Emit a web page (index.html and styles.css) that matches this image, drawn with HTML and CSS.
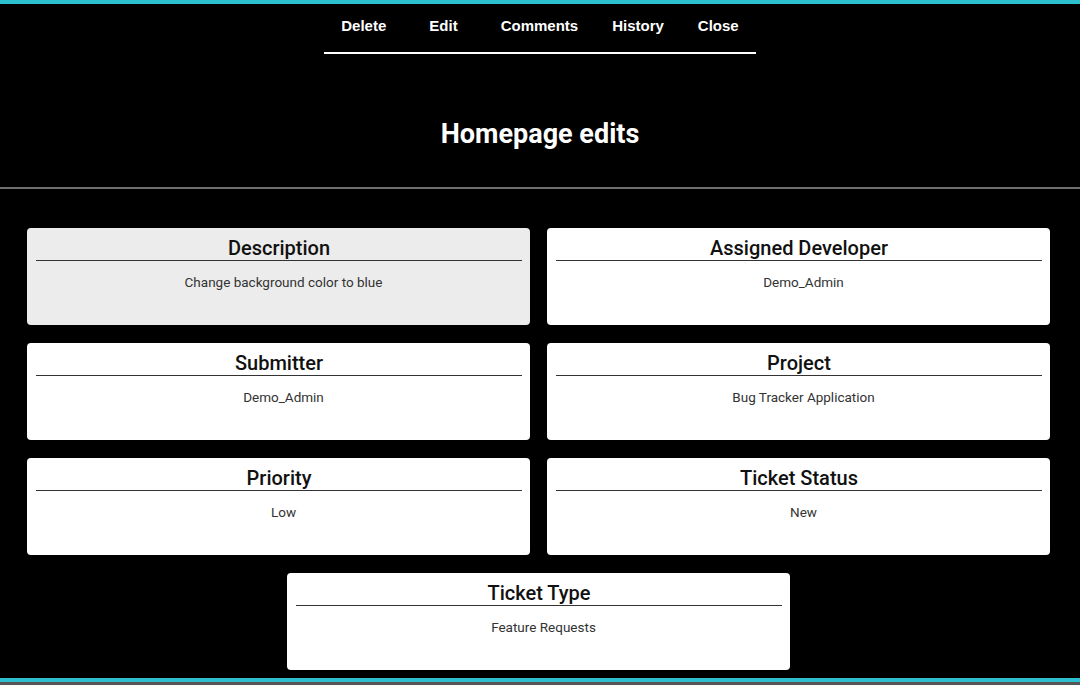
FILE: index.html
```html
<!DOCTYPE html>
<html>
<head>
<meta charset="utf-8">
<link rel="stylesheet" href="styles.css">
</head>
<body>
<div class="page">
  <header class="top">
    <nav class="actions">
      <a class="act">Delete</a>
      <a class="act act-edit">Edit</a>
      <a class="act">Comments</a>
      <a class="act">History</a>
      <a class="act">Close</a>
    </nav>
    <h1 class="title">Homepage edits</h1>
  </header>
  <main class="grid">
    <section class="card card-hover">
      <h3 class="card-head">Description</h3>
      <p class="card-val">Change background color to blue</p>
    </section>
    <section class="card">
      <h3 class="card-head">Assigned Developer</h3>
      <p class="card-val">Demo_Admin</p>
    </section>
    <section class="card">
      <h3 class="card-head">Submitter</h3>
      <p class="card-val">Demo_Admin</p>
    </section>
    <section class="card">
      <h3 class="card-head">Project</h3>
      <p class="card-val">Bug Tracker Application</p>
    </section>
    <section class="card">
      <h3 class="card-head">Priority</h3>
      <p class="card-val">Low</p>
    </section>
    <section class="card">
      <h3 class="card-head">Ticket Status</h3>
      <p class="card-val">New</p>
    </section>
    <section class="card card-wide">
      <h3 class="card-head">Ticket Type</h3>
      <p class="card-val">Feature Requests</p>
    </section>
  </main>
  <footer class="bottom"></footer>
</div>
</body>
</html>
```

FILE: styles.css
```css
html, body {
  margin: 0;
  padding: 0;
  background: #000;
}
body {
  width: 1080px;
  height: 685px;
  overflow: hidden;
  font-family: Roboto, "Noto Sans", sans-serif;
}
.page {
  border-top: 4px solid #2cc0cf;
  height: 681px;
  display: flex;
  flex-direction: column;
}
.top {
  display: flex;
  flex-direction: column;
  align-items: center;
}
.actions {
  display: flex;
  margin-top: 13px;
  padding-bottom: 18px;
  border-bottom: 2px solid #fff;
}
.act {
  font-family: "Liberation Sans", Arial, sans-serif;
  font-weight: bold;
  font-size: 15px;
  line-height: 17px;
  color: #fff;
  padding: 0 17px;
}
.act-edit {
  margin: 0 9px;
}
.title {
  margin: 65px 0 0;
  font-family: Roboto, sans-serif;
  font-weight: 700;
  font-size: 27px;
  line-height: 30px;
  color: #fff;
  align-self: stretch;
  text-align: center;
  padding-bottom: 38px;
  border-bottom: 2px solid #6e6e6e;
}
.grid {
  display: grid;
  grid-template-columns: 503px 503px;
  column-gap: 17px;
  row-gap: 18px;
  grid-auto-rows: 97px;
  padding: 39px 0 0 27px;
}
.card {
  background: #fff;
  border-radius: 4px;
  padding: 0 8px 0 9px;
}
.card-hover {
  background: #ececec;
}
.card-wide {
  grid-column: 1 / -1;
  justify-self: center;
  width: 486px;
}
.card-head {
  margin: 0;
  padding-top: 8px;
  font-size: 20px;
  line-height: 24px;
  font-weight: 500;
  color: #111;
  text-align: center;
  border-bottom: 1px solid #333;
}
.card-val {
  margin: 13px 0 0;
  padding-left: 9px;
  font-size: 13.5px;
  line-height: 16px;
  color: #333;
  text-align: center;
}
.bottom {
  margin-top: auto;
  height: 4px;
  background: #2cc0cf;
  border-bottom: 3px solid #555;
}
```
